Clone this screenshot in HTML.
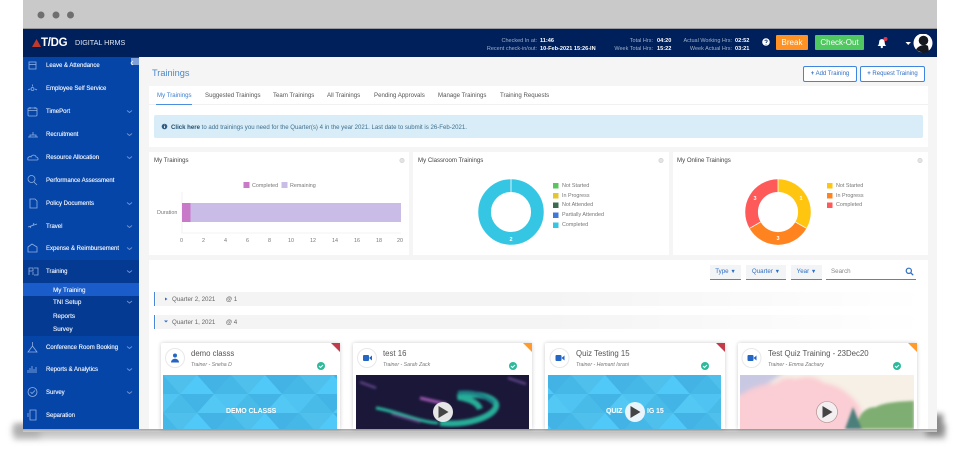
<!DOCTYPE html>
<html><head><meta charset="utf-8"><style>
html,body{margin:0;padding:0;width:960px;height:450px;overflow:hidden;background:#fff}
body{position:relative;font-family:"Liberation Sans",sans-serif}
#p{position:absolute;left:0;top:0;width:960px;height:450px;overflow:hidden;filter:blur(.35px)}
.a{position:absolute}
.t{position:absolute;line-height:10px;white-space:nowrap;font-size:6.1px;color:#555}
.s{color:#eaf1fc;font-size:6px;left:46px;text-shadow:0 0 .4px #fff}
.sub{color:#e4ecfa;font-size:6.3px;left:53px;text-shadow:0 0 .4px #fff}
.h{color:#9fb0c9;font-size:5.5px;text-align:right}
.v{color:#fff;font-size:5.6px;font-weight:bold}
.tab{font-size:6.1px;color:#555;top:91px}
.lg{font-size:5.4px;color:#777}
.ct{font-size:6.1px;color:#444;top:156px}
.nm{font-size:7.8px;color:#555;top:349px}
.tr{font-size:5.2px;font-style:italic;color:#777;top:360px}
.th{font-size:7px;font-weight:bold;color:#fff;top:407px;letter-spacing:-.1px}
.card{position:absolute;top:343px;height:86px;background:#fff;box-shadow:0 0 4px rgba(0,0,0,.2);border-radius:2px 2px 0 0}
.btn{position:absolute;top:66px;height:14px;border:1px solid #3f86e0;border-radius:2px;background:#fff;color:#2f6fc4;font-size:6px;line-height:14px;text-align:center;white-space:nowrap}
.f{position:absolute;top:265px;height:14px;background:#f3f4f6;border-bottom:1px solid #4a86d8;color:#2f6fc4;font-size:6.2px;line-height:14px;text-align:center;white-space:nowrap}
.f b{font-size:5.5px}
</style></head><body><div id="p">
<div class="a" style="left:14px;top:424px;width:932px;height:16px;background:linear-gradient(#aaa,#ddd);filter:blur(3px)"></div>
<div class="a" style="left:14px;top:426px;width:26px;height:10px;background:#aaa;filter:blur(4px)"></div>
<div class="a" style="left:926px;top:414px;width:17px;height:22px;background:#888;filter:blur(3px)"></div>
<div class="a" style="left:23px;top:429px;width:914px;height:3px;background:linear-gradient(#a4a4a4,#cfcfcf)"></div>
<div class="a" style="left:23px;top:0;width:914px;height:429px;background:#f5f5f5;overflow:hidden">
<div class="a" style="left:0;top:0;width:914px;height:29px;background:#c9c9c9"></div>
<div class="a" style="left:0;top:28px;width:914px;height:1px;background:#999"></div>
<div class="a" style="left:0;top:29px;width:914px;height:28px;background:#00205b"></div>
<div class="a" style="left:0;top:57px;width:116px;height:372px;background:#0645a8"></div>
<div class="a" style="left:0;top:260px;width:116px;height:76px;background:#053a92"></div>
<div class="a" style="left:0;top:283px;width:116px;height:13px;background:#1a5cc9"></div>
<div class="a" style="left:108px;top:58px;width:8px;height:7px;background:#7f9fd8"></div>
</div>
<svg class="a" style="left:0;top:0" width="960" height="450" viewBox="0 0 960 450">
<circle cx="41" cy="15" r="3.5" fill="#6f6f6f"/><circle cx="56" cy="15" r="3.5" fill="#6f6f6f"/><circle cx="70.500" cy="15" r="3.500" fill="#6f6f6f"/>
<polygon points="32,47 36.500,39 41,47" fill="#c0392b"/>
<path d="M133 61l-2 2 2 2" fill="none" stroke="#fff" stroke-width=".8"/>
<g fill="none" stroke="#a9c4ee" stroke-width=".8" opacity=".85">
<rect x="29" y="62" width="7" height="7"/><path d="M29 64.500h7"/>
<path d="M28 90l2-1M37 90l-2-1M32.500 84.500v2"/><circle cx="32.500" cy="89" r="1.500"/>
<rect x="28" y="108" width="9" height="8" rx="1"/><path d="M28 110.500h9M30 107v2M35 107v2"/>
<path d="M28 137h10M30 137v-2h6v2M33 135v-3"/>
<path d="M28 160c-1-3 2-4 3-3 1-3 5-2 5 0 2 0 3 3 1 3z"/>
<circle cx="31.500" cy="179" r="3.500"/><path d="M34 182l3 3"/>
<path d="M30 199h5l2 2v7h-7z"/>
<path d="M28 227l9-3M31 226l-1 2M33 225l1-2"/>
<path d="M28 252v-5l4-3 5 3v5z"/>
<path d="M29 275v-7h4v3h-4M34 268h4v7h-4M33 275v-3"/>
<path d="M32.500 342v4M28 352l4.500-6 4.500 6z"/>
<path d="M28 373v-3M30 373v-5M32 373v-7M34 373v-4M36 373v-6"/>
<circle cx="32.500" cy="392" r="4.500"/><path d="M30.500 392l1.500 1.500 3-3"/>
<path d="M30 410h6v10h-6zM28 413v4"/>
</g>
<g fill="none" stroke="#6d93d6" stroke-width=".9">
<path d="M127 110.500l2.500 2 2.500-2M127 133.500l2.500 2 2.500-2M127 156.500l2.500 2 2.500-2M127 202.500l2.500 2 2.500-2M127 225.500l2.500 2 2.500-2M127 247.500l2.500 2 2.500-2M127 270.500l2.500 2 2.500-2M127 301l2.500 2 2.500-2M127 346.500l2.500 2 2.500-2M127 368.500l2.500 2 2.500-2M127 391.500l2.500 2 2.500-2"/>
</g>
</svg>
<span class="t" style="left:41px;top:38px;font-size:11.500px;font-weight:bold;color:#fff;letter-spacing:-.3px">T/DG</span>
<span class="t" style="left:75px;top:38px;font-size:7.200px;color:#dfe6f2">DIGITAL HRMS</span>
<span class="t s" style="top:61px">Leave &amp; Attendance</span>
<span class="t s" style="top:84px">Employee Self Service</span>
<span class="t s" style="top:107px">TimePort</span>
<span class="t s" style="top:130px">Recruitment</span>
<span class="t s" style="top:153px">Resource Allocation</span>
<span class="t s" style="top:176px">Performance Assessment</span>
<span class="t s" style="top:199px">Policy Documents</span>
<span class="t s" style="top:222px">Travel</span>
<span class="t s" style="top:244px">Expense &amp; Reimbursement</span>
<span class="t s" style="top:267px">Training</span>
<span class="t sub" style="top:286px">My Training</span>
<span class="t sub" style="top:298px">TNI Setup</span>
<span class="t sub" style="top:312px">Reports</span>
<span class="t sub" style="top:325px">Survey</span>
<span class="t s" style="top:343px">Conference Room Booking</span>
<span class="t s" style="top:365px">Reports &amp; Analytics</span>
<span class="t s" style="top:388px">Survey</span>
<span class="t s" style="top:411px">Separation</span>
<span class="t h" style="right:423px;top:36px">Checked In at:</span><span class="t v" style="left:540px;top:36px">11:46</span>
<span class="t h" style="right:423px;top:44px">Recent check-in/out:</span><span class="t v" style="left:540px;top:44px">10-Feb-2021 15:26-IN</span>
<span class="t h" style="right:307px;top:36px">Total Hrs:</span><span class="t v" style="left:657px;top:36px">04:20</span>
<span class="t h" style="right:307px;top:44px">Week Total Hrs:</span><span class="t v" style="left:657px;top:44px">15:22</span>
<span class="t h" style="right:228px;top:36px">Actual Working Hrs:</span><span class="t v" style="left:735px;top:36px">02:52</span>
<span class="t h" style="right:228px;top:44px">Week Actual Hrs:</span><span class="t v" style="left:735px;top:44px">03:21</span>
<div class="a" style="left:776px;top:35px;width:32px;height:15px;background:#ff9222;color:#fff;font-size:8px;line-height:15px;text-align:center;border-radius:1px">Break</div>
<div class="a" style="left:815px;top:35px;width:49px;height:15px;background:#4fc95f;color:#fff;font-size:8px;line-height:15px;text-align:center;border-radius:1px">Check-Out</div>
<svg class="a" style="left:760px;top:34px" width="180" height="20" viewBox="760 34 180 20">
<circle cx="766" cy="42" r="3.800" fill="#fff"/><path d="M764.800 41c.3-1.500 2.600-1.200 2.400.2-.1.800-1.200.9-1.200 1.800M766 44.200v.5" stroke="#00205b" stroke-width=".8" fill="none"/>
<path d="M877.500 46c1.500-1 1.500-3 1.800-5 .3-2.500 4.900-2.500 5.200 0 .3 2 .3 4 1.800 5z" fill="#fff"/><circle cx="881.800" cy="47" r="1.200" fill="#fff"/><circle cx="885.500" cy="39" r="2" fill="#e0344a"/>
<polygon points="905.500,42 911,42 908.200,45" fill="#fff"/>
<circle cx="923" cy="43" r="9.500" fill="#fff"/><circle cx="923.500" cy="40.500" r="4.800" fill="#15171f"/><path d="M916 50c2-5 10-6 12-4l1 6-6 1z" fill="#15171f"/>
</svg>
<span class="t" style="left:152px;top:68px;font-size:9.200px;color:#4a88c9">Trainings</span>
<div class="btn" style="left:803px;width:52px"><b>+</b> Add Training</div>
<div class="btn" style="left:860px;width:63px"><b>+</b> Request Training</div>
<div class="a" style="left:149px;top:86px;width:779px;height:61px;background:#fff"></div>
<div class="a" style="left:149px;top:104px;width:779px;height:1px;background:#f1f1f1"></div>
<div class="a" style="left:156px;top:104px;width:36px;height:1px;background:#4a8fdd"></div>
<span class="t tab" style="left:157px;color:#3d80cf">My Trainings</span>
<span class="t tab" style="left:205px">Suggested Trainings</span>
<span class="t tab" style="left:273px">Team Trainings</span>
<span class="t tab" style="left:327px">All Trainings</span>
<span class="t tab" style="left:374px">Pending Approvals</span>
<span class="t tab" style="left:438px">Manage Trainings</span>
<span class="t tab" style="left:500px">Training Requests</span>
<div class="a" style="left:154px;top:115px;width:769px;height:23px;background:#d8edf7;border-radius:2px"></div>
<svg class="a" style="left:161px;top:123px" width="7" height="7"><circle cx="3.500" cy="3.500" r="2.800" fill="#2f5f86"/><path d="M3.500 3v2M3.500 1.700v.6" stroke="#fff" stroke-width=".8"/></svg>
<span class="t" style="left:171px;top:123px;font-size:6.070px;color:#3f6f8e"><b style="color:#234f72">Click here</b> to add trainings you need for the Quarter(s) 4 in the year 2021. Last date to submit is 26-Feb-2021.</span>

<div class="a" style="left:149px;top:152px;width:260px;height:103px;background:#fff"></div>
<div class="a" style="left:413px;top:152px;width:256px;height:103px;background:#fff"></div>
<div class="a" style="left:673px;top:152px;width:255px;height:103px;background:#fff"></div>
<span class="t ct" style="left:154px">My Trainings</span>
<span class="t ct" style="left:418px">My Classroom Trainings</span>
<span class="t ct" style="left:677px">My Online Trainings</span>
<span class="t lg" style="left:252px;top:181px">Completed</span>
<span class="t lg" style="left:290px;top:181px">Remaining</span>
<span class="t lg" style="left:157px;top:208px">Duration</span>
<span class="t lg" style="left:180px;top:236px">0</span><span class="t lg" style="left:202px;top:236px">2</span><span class="t lg" style="left:224px;top:236px">4</span><span class="t lg" style="left:246px;top:236px">6</span><span class="t lg" style="left:268px;top:236px">8</span><span class="t lg" style="left:288px;top:236px">10</span><span class="t lg" style="left:310px;top:236px">12</span><span class="t lg" style="left:332px;top:236px">14</span><span class="t lg" style="left:354px;top:236px">16</span><span class="t lg" style="left:376px;top:236px">18</span><span class="t lg" style="left:397px;top:236px">20</span>
<span class="t lg" style="left:562px;top:181px">Not Started</span>
<span class="t lg" style="left:562px;top:191px">In Progress</span>
<span class="t lg" style="left:562px;top:200px">Not Attended</span>
<span class="t lg" style="left:562px;top:210px">Partially Attended</span>
<span class="t lg" style="left:562px;top:220px">Completed</span>
<span class="t lg" style="left:836px;top:181px">Not Started</span>
<span class="t lg" style="left:836px;top:191px">In Progress</span>
<span class="t lg" style="left:836px;top:200px">Completed</span>

<svg class="a" style="left:0;top:0" width="960" height="450" viewBox="0 0 960 450">
<g fill="#e4e4e4" stroke="#ccc" stroke-width=".6"><circle cx="402" cy="160.500" r="2.200"/><circle cx="661" cy="160.500" r="2.200"/><circle cx="920" cy="160.500" r="2.200"/></g>
<rect x="243.500" y="182" width="6" height="6" fill="#c879c7"/><rect x="281.500" y="182" width="6" height="6" fill="#c9bde8"/>
<path d="M182 192v41h219" fill="none" stroke="#efefef" stroke-width=".8"/>
<rect x="182" y="203" width="8.500" height="19" fill="#c879c7"/><rect x="190.500" y="203" width="210.500" height="19" fill="#c9bde8"/>
<circle cx="511" cy="212" r="26.400" fill="none" stroke="#35c6e4" stroke-width="12.700"/>
<rect x="510.600" y="179" width=".8" height="13" fill="#fff"/>
<text x="511" y="241" font-size="5.500" font-weight="bold" fill="#fff" text-anchor="middle" font-family="Liberation Sans">2</text>
<rect x="553" y="183" width="5.500" height="5.500" fill="#5cc45c"/><rect x="553" y="193" width="5.500" height="5.500" fill="#e6c62e"/><rect x="553" y="202.500" width="5.500" height="5.500" fill="#3c6b4e"/><rect x="553" y="212.500" width="5.500" height="5.500" fill="#3f78d8"/><rect x="553" y="222.500" width="5.500" height="5.500" fill="#35c6e4"/>
<g fill="none" stroke-width="12.700">
<path d="M778 185.600A26.400 26.400 0 0 1 800.900 225.200" stroke="#ffc50f"/>
<path d="M800.900 225.200A26.400 26.400 0 0 1 755.100 225.200" stroke="#ff8420"/>
<path d="M755.100 225.200A26.400 26.400 0 0 1 778 185.600" stroke="#ff5a5a"/>
</g>
<path d="M778 179v13M795.400 222l10.800 6.200M760.600 222l-10.800 6.200" stroke="#fff" stroke-width=".8"/>
<g font-size="5.500" font-weight="bold" fill="#fff" text-anchor="middle" font-family="Liberation Sans"><text x="801" y="200">1</text><text x="778" y="240">3</text><text x="755" y="200">3</text></g>
<rect x="827" y="183" width="5.500" height="5.500" fill="#ffc50f"/><rect x="827" y="193" width="5.500" height="5.500" fill="#ff8420"/><rect x="827" y="202.500" width="5.500" height="5.500" fill="#ff5a5a"/>
</svg>

<div class="a" style="left:149px;top:260px;width:779px;height:169px;background:#fff"></div>
<div class="f" style="left:710px;width:31px">Type <b>&#9660;</b></div>
<div class="f" style="left:746px;width:40px">Quarter <b>&#9660;</b></div>
<div class="f" style="left:791px;width:31px">Year <b>&#9660;</b></div>
<div class="a" style="left:826px;top:279px;width:90px;height:1px;background:#4a86d8"></div>
<span class="t" style="left:831px;top:267px;font-size:6.200px;color:#888">Search</span>
<svg class="a" style="left:905px;top:267px" width="9" height="9"><circle cx="3.800" cy="3.800" r="2.600" fill="none" stroke="#2f6fc4" stroke-width="1.200"/><path d="M5.800 5.800l2.400 2.400" stroke="#2f6fc4" stroke-width="1.300"/></svg>
<div class="a" style="left:154px;top:292px;width:1px;height:14px;background:#4a86d8"></div>
<div class="a" style="left:156px;top:292px;width:770px;height:14px;background:linear-gradient(90deg,#f4f4f4 50%,#fff)"></div>
<div class="a" style="left:154px;top:315px;width:1px;height:14px;background:#4a86d8"></div>
<div class="a" style="left:156px;top:315px;width:770px;height:14px;background:linear-gradient(90deg,#f4f4f4 50%,#fff)"></div>
<svg class="a" style="left:163px;top:296px" width="6" height="28"><path d="M2 1.500l2.500 1.500-2.500 1.500z" fill="#2f6fc4"/><path d="M1 24.500h4l-2 2z" fill="#2f6fc4"/></svg>
<span class="t" style="left:172px;top:295px;font-size:6.200px;color:#666">Quarter 2, 2021</span><span class="t" style="left:226px;top:295px;font-size:6.200px;color:#666"><b>@</b> 1</span>
<span class="t" style="left:172px;top:318px;font-size:6.200px;color:#666">Quarter 1, 2021</span><span class="t" style="left:226px;top:318px;font-size:6.200px;color:#666"><b>@</b> 4</span>

<div class="card" style="left:161px;width:179px"></div>
<div class="card" style="left:353px;width:179px"></div>
<div class="card" style="left:545px;width:180px"></div>
<div class="card" style="left:738px;width:179px"></div>
<span class="t nm" style="left:191px">demo classs</span>
<span class="t nm" style="left:383px">test 16</span>
<span class="t nm" style="left:576px">Quiz Testing 15</span>
<span class="t nm" style="left:768px">Test Quiz Training - 23Dec20</span>
<span class="t tr" style="left:191px">Trainer - Sneha D</span>
<span class="t tr" style="left:383px">Trainer - Sarah Zack</span>
<span class="t tr" style="left:576px">Trainer - Hemant Israni</span>
<span class="t tr" style="left:768px">Trainer - Emma Zachary</span>

<svg class="a" style="left:0;top:0" width="960" height="450" viewBox="0 0 960 450">
<defs>
<pattern id="tri" x="163" y="375" width="68" height="38" patternUnits="userSpaceOnUse">
<rect width="68" height="38" fill="#48bbe9"/>
<polygon points="0,0 34,0 17,19" fill="#4fc0ec"/><polygon points="34,0 68,0 51,19" fill="#42b3e4"/>
<polygon points="17,19 51,19 34,0" fill="#50c8f8"/><polygon points="-17,19 17,19 0,0" fill="#46b8e8"/><polygon points="51,19 85,19 68,0" fill="#46b8e8"/>
<polygon points="0,38 34,38 17,19" fill="#48bbe9"/><polygon points="34,38 68,38 51,19" fill="#54c8f4"/>
<polygon points="17,19 51,19 34,38" fill="#42b4e6"/><polygon points="-17,19 17,19 0,38" fill="#4fc4f2"/><polygon points="51,19 85,19 68,38" fill="#4fc4f2"/>
</pattern>
<clipPath id="c2"><rect x="356" y="375" width="173" height="54"/></clipPath>
<clipPath id="c4"><rect x="740" y="375" width="174" height="54"/></clipPath>
<filter id="b1" x="-20%" y="-20%" width="140%" height="140%"><feGaussianBlur stdDeviation="1.200"/></filter>
<filter id="b2" x="-20%" y="-20%" width="140%" height="140%"><feGaussianBlur stdDeviation="2.500"/></filter>
</defs>
<g fill="#fff" stroke="#e8e8e8" stroke-width="1"><circle cx="175" cy="358" r="9.500"/><circle cx="367" cy="358" r="9.500"/><circle cx="559.500" cy="358" r="9.500"/><circle cx="751.500" cy="358" r="9.500"/></g>
<circle cx="175" cy="355.500" r="2" fill="#2566c4"/><path d="M171 362.500c0-5 8-5 8 0z" fill="#2566c4"/>
<g fill="#2566c4"><rect x="363" y="355" width="6" height="6" rx="1"/><path d="M369 358l3-2.500v5z"/><rect x="555.500" y="355" width="6" height="6" rx="1"/><path d="M561.500 358l3-2.500v5z"/><rect x="747.500" y="355" width="6" height="6" rx="1"/><path d="M753.500 358l3-2.500v5z"/></g>
<polygon points="331,343 340,343 340,352" fill="#c23b4a"/><polygon points="523,343 532,343 532,352" fill="#ff9a2b"/><polygon points="716,343 725,343 725,352" fill="#c23b4a"/><polygon points="908,343 917,343 917,352" fill="#ff9a2b"/>
<g fill="#2dba9b"><circle cx="321" cy="366" r="4"/><circle cx="513" cy="366" r="4"/><circle cx="705" cy="366" r="4"/><circle cx="897" cy="366" r="4"/></g>
<g fill="none" stroke="#fff" stroke-width="1"><path d="M319 366l1.500 1.500 2.500-2.500M511 366l1.500 1.500 2.500-2.500M703 366l1.500 1.500 2.500-2.500M895 366l1.500 1.500 2.500-2.500"/></g>
<rect x="163" y="375" width="174" height="54" fill="url(#tri)"/>
<rect x="548" y="375" width="173" height="54" fill="url(#tri)"/>
<g clip-path="url(#c2)">
<rect x="356" y="375" width="173" height="54" fill="#1a1738"/>
<g fill="none" filter="url(#b1)">
<path d="M376 408c20 3 42 14 62 15" stroke="#27b9a0" stroke-width="3"/>
<path d="M440 423c28 3 52-6 56-16 3-9-20-16-38-10 12 2 20 6 22 12" stroke="#26ad98" stroke-width="6"/>
<path d="M458 393c14-2 26 2 36 10" stroke="#1d7f86" stroke-width="4"/>
<path d="M420 398l26 6" stroke="#a058b4" stroke-width="3"/>
<path d="M360 382l16 6M508 378l18 6M392 414l28 8" stroke="#5f4488" stroke-width="2.500"/>
</g>
</g>
<g clip-path="url(#c4)">
<rect x="740" y="375" width="174" height="54" fill="#f6f0e6"/>
<g filter="url(#b2)">
<path d="M736 371h50l-20 14-30 12z" fill="#c9c8e2"/>
<path d="M736 400c8-10 26-16 40-17 8-6 14-6 20-4 12-4 20-2 28 4 14 2 26 10 36 24l4 26H736z" fill="#fbcdd4"/>
</g>
<g filter="url(#b1)">
<path d="M858 429c-2-12 6-22 18-22 6-4 24-6 38-6v28z" fill="#7fae72"/>
<path d="M845 429l8-22 9 22z" fill="#4b7f7c"/>
</g>
</g>
<g><circle cx="443" cy="412" r="10" fill="#e6e6e6"/><circle cx="635" cy="412" r="10" fill="#eaf5fb"/><circle cx="827" cy="412" r="10.500" fill="#f3eef0" stroke="#a88" stroke-width=".6"/>
<g fill="#444"><path d="M438.500 406v12l10-6z"/><path d="M630.500 406v12l10-6z"/><path d="M822.500 406v12l10-6z"/></g></g>
</svg>
<span class="t th" style="left:226px">DEMO CLASSS</span>
<span class="t th" style="left:606px">QUIZ</span>
<span class="t th" style="left:647px">IG 15</span>
</div></body></html>
